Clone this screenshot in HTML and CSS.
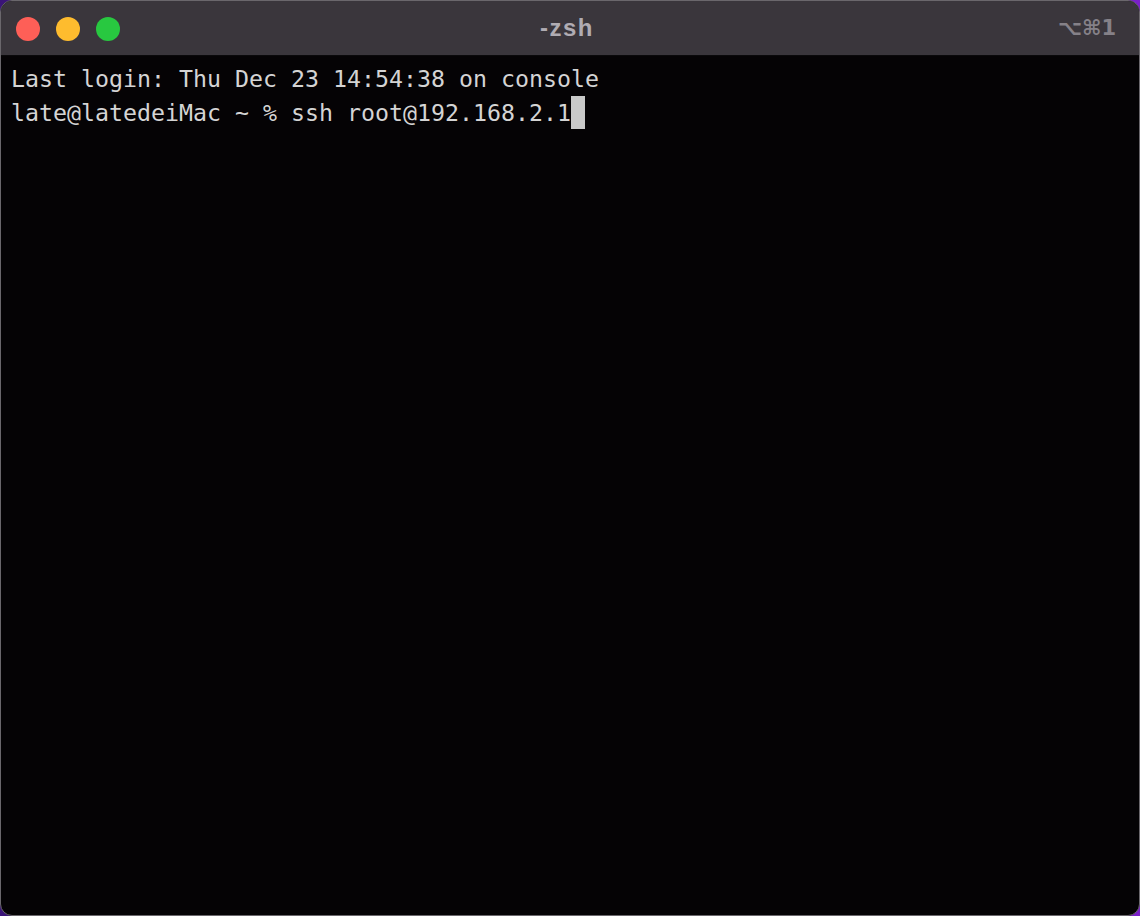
FILE: index.html
```html
<!DOCTYPE html>
<html>
<head>
<meta charset="utf-8">
<link rel="stylesheet" href="styles.css">
</head>
<body>
<div class="window">
  <div class="titlebar">
    <div class="lights">
      <span class="light red"></span>
      <span class="light yellow"></span>
      <span class="light green"></span>
    </div>
    <div class="title">-zsh</div>
    <div class="shortcut">⌥⌘1</div>
  </div>
  <div class="terminal">
    <div class="line">Last login: Thu Dec 23 14:54:38 on console</div>
    <div class="line">late@latedeiMac ~ % ssh root@192.168.2.1<span class="cursor"></span></div>
  </div>
</div>
</body>
</html>
```
FILE: styles.css
```css
html, body {
  margin: 0;
  padding: 0;
  height: 100%;
}
body {
  background: linear-gradient(90deg, #3a1478 0%, #5a1ab0 50%, #7a20c8 100%);
  overflow: hidden;
}
.window {
  box-sizing: border-box;
  width: 1140px;
  height: 916px;
  border: 1px solid #6a676c;
  border-radius: 12px;
  overflow: hidden;
  display: flex;
  flex-direction: column;
  background: #050305;
}
.titlebar {
  height: 54px;
  flex: none;
  background: #3a363c;
  display: grid;
  grid-template-columns: 1fr auto 1fr;
  align-items: center;
  padding: 0 23px 0 15px;
  border-bottom: 1px solid #0a090b;
}
.lights {
  display: flex;
  gap: 16px;
  align-items: center;
  margin-top: 1px;
}
.light {
  width: 24px;
  height: 24px;
  border-radius: 50%;
  display: block;
}
.red { background: #fe5f57; }
.yellow { background: #febc2e; }
.green { background: #28c840; }
.title {
  font-family: "Liberation Sans", Arial, sans-serif;
  font-weight: bold;
  font-size: 24px;
  letter-spacing: 1.5px;
  color: #b0acb3;
  padding-left: 2px;
}
.shortcut {
  justify-self: end;
  font-family: "DejaVu Sans", "Liberation Sans", sans-serif;
  font-weight: bold;
  font-size: 21px;
  color: #858188;
}
.terminal {
  flex: 1;
  padding: 6px 10px;
  font-family: "DejaVu Sans Mono", monospace;
  font-size: 23.25px;
  line-height: 34px;
  color: #d4d4d4;
}
.line {
  white-space: pre;
  height: 34px;
}
.cursor {
  display: inline-block;
  width: 14px;
  height: 33px;
  background: #c9c9c9;
  vertical-align: top;
}
```
